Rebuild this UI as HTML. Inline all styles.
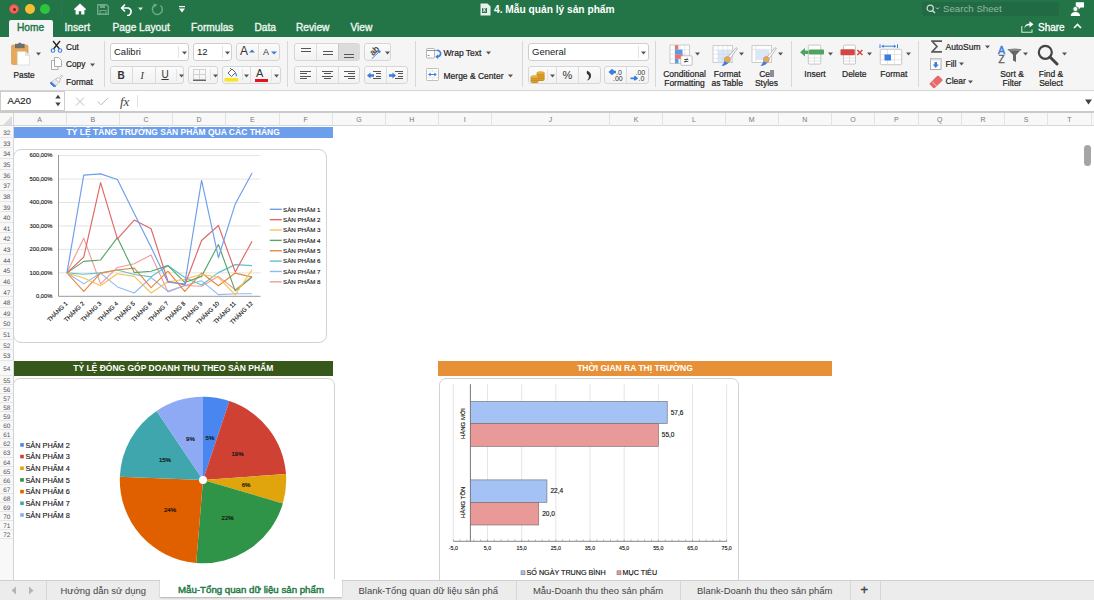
<!DOCTYPE html><html><head><meta charset="utf-8"><style>
*{margin:0;padding:0;box-sizing:border-box}
html,body{width:1094px;height:600px;overflow:hidden;background:#fff;font-family:"Liberation Sans",sans-serif;position:relative}
.a{position:absolute}
.t{position:absolute;white-space:nowrap;line-height:1}
.sb{-webkit-text-stroke:0.3px currentColor}
.rb{-webkit-text-stroke:0.2px #222}
.btn{position:absolute;background:linear-gradient(#fbfbfb,#f2f2f2);border:1px solid #d6d6d6;border-radius:3px}
.sep{position:absolute;width:1px;background:#d8d8d8}
.ch{position:absolute;top:113px;height:13px;font-size:7px;color:#777;text-align:center;line-height:13px;border-right:1px solid #e2e2e2}
.rh{position:absolute;left:0;width:13.5px;font-size:6.4px;color:#555;text-rendering:geometricPrecision;text-align:center;border-bottom:1px solid #e6e6e6}
</style></head><body>
<div class="a" style="left:0;top:0;width:1094px;height:37px;background:#237548"></div>
<div class="a" style="left:9px;top:4px;width:10px;height:10px;border-radius:50%;background:#ed6a5e;border:0.5px solid #cf4f45"></div>
<div class="a" style="left:12.5px;top:7.5px;width:3px;height:3px;border-radius:50%;background:#8c1a10"></div>
<div class="a" style="left:24.5px;top:4px;width:10px;height:10px;border-radius:50%;background:#f6be30"></div>
<div class="a" style="left:40px;top:4px;width:10px;height:10px;border-radius:50%;background:#2ec440"></div>
<div class="a" style="left:61px;top:3px;width:1px;height:13px;background:#2c7a50"></div>
<svg class="a" style="left:73px;top:3px" width="14" height="12" viewBox="0 0 14 12"><path d="M7 0.6 L0.8 6.2 L2 7.2 L2.6 6.7 V11.6 H5.8 V8.2 H8.2 V11.6 H11.4 V6.7 L12 7.2 L13.2 6.2 Z" fill="#fff"/></svg>
<svg class="a" style="left:97px;top:4px" width="12" height="11" viewBox="0 0 12 11"><path d="M0.7 0.7 H9.5 L11.3 2.5 V10.3 H0.7 Z" fill="none" stroke="#6fa886" stroke-width="1.4"/><rect x="3" y="1" width="5" height="3" fill="#6fa886"/><rect x="3" y="6.5" width="6" height="3.5" fill="none" stroke="#6fa886" stroke-width="1"/></svg>
<svg class="a" style="left:120px;top:3px" width="15" height="13" viewBox="0 0 15 13"><path d="M5 1.5 L1.5 5 L5 8.5 M1.8 5 H8.5 A4 4 0 0 1 8.5 12.5 H7" fill="none" stroke="#fff" stroke-width="1.6" stroke-linejoin="round"/></svg>
<svg class="a" style="left:138px;top:7px" width="5" height="4" viewBox="0 0 5 4"><path d="M0 0.5 H5 L2.5 3.5Z" fill="#d8e8de"/></svg>
<svg class="a" style="left:151px;top:3px" width="13" height="13" viewBox="0 0 13 13"><path d="M9.5 2.5 A5 5 0 1 1 4 2" fill="none" stroke="#6fa886" stroke-width="1.5"/><path d="M2.5 0.5 L6.5 1.5 L3.5 4.5Z" fill="#6fa886"/></svg>
<svg class="a" style="left:179px;top:6px" width="6" height="7" viewBox="0 0 6 7"><rect x="0" y="0" width="6" height="1.2" fill="#fff"/><path d="M0 2.6 H6 L3 6.4Z" fill="#fff"/></svg>
<svg class="a" style="left:480px;top:3px" width="11" height="13" viewBox="0 0 11 13"><path d="M0.5 0.5 H7.5 L10.5 3.5 V12.5 H0.5Z" fill="#e8f1ec"/><rect x="2" y="5" width="5" height="5" fill="#237548"/><text x="2.6" y="9.4" font-size="5" font-family="Liberation Sans" font-weight="bold" fill="#fff">X</text></svg>
<div class="t" style="left:494px;top:5px;font-size:10.2px;font-weight:bold;color:#fff">4. Mẫu quản lý sản phẩm</div>
<div class="a" style="left:922px;top:2px;width:137px;height:14px;border-radius:3px;background:#226a43"></div>
<svg class="a" style="left:926px;top:4px" width="14" height="10" viewBox="0 0 14 10"><circle cx="4.2" cy="4.2" r="3.1" fill="none" stroke="#cfe2d6" stroke-width="1.2"/><path d="M6.4 6.4 L9 9" stroke="#cfe2d6" stroke-width="1.4"/><path d="M10 3.5 L11.5 5 L13 3.5" fill="none" stroke="#cfe2d6" stroke-width="0.9"/></svg>
<div class="t" style="left:943px;top:4px;font-size:9.7px;color:#8fbca0">Search Sheet</div>
<svg class="a" style="left:1070px;top:1px" width="16" height="16" viewBox="0 0 16 16"><path d="M5.8 1.2 H14 V6.6 H10.6 L8.6 8.6 V6.6 H5.8Z" fill="#fff"/><circle cx="5.4" cy="8" r="2.5" fill="#fff" stroke="#237548" stroke-width="0.8"/><path d="M0.7 15 Q0.9 11 5.4 11 Q9.9 11 10.1 15Z" fill="#fff"/></svg>
<svg class="a" style="left:1021px;top:21px" width="13" height="12" viewBox="0 0 13 12"><path d="M0.8 5 V11.2 H11 V8.5" fill="none" stroke="#d4e6da" stroke-width="1.1"/><path d="M3 9 Q3.5 4.5 8.5 4.3 V6.6 L12.5 3.3 L8.5 0.2 V2.4 Q3.2 2.8 3 9Z" fill="#fff"/></svg>
<div class="t" style="left:1038px;top:22.5px;font-size:10px;color:#fff;-webkit-text-stroke:0.3px #fff">Share</div>
<svg class="a" style="left:1073px;top:23px" width="9" height="6" viewBox="0 0 9 6"><path d="M1 5 L4.5 1.5 L8 5" fill="none" stroke="#fff" stroke-width="1.6"/></svg>
<div class="a" style="left:9px;top:20px;width:44px;height:17px;background:#f5f5f5;border-radius:2px 2px 0 0"></div>
<div class="t" style="left:17px;top:23px;font-size:10.2px;color:#237548;-webkit-text-stroke:0.4px #237548">Home</div>
<div class="t" style="left:64.5px;top:23px;font-size:10.2px;color:#eef5f0;-webkit-text-stroke:0.35px #eef5f0">Insert</div>
<div class="t" style="left:112.5px;top:23px;font-size:10.2px;color:#eef5f0;-webkit-text-stroke:0.35px #eef5f0">Page Layout</div>
<div class="t" style="left:191px;top:23px;font-size:10.2px;color:#eef5f0;-webkit-text-stroke:0.35px #eef5f0">Formulas</div>
<div class="t" style="left:254.5px;top:23px;font-size:10.2px;color:#eef5f0;-webkit-text-stroke:0.35px #eef5f0">Data</div>
<div class="t" style="left:296px;top:23px;font-size:10.2px;color:#eef5f0;-webkit-text-stroke:0.35px #eef5f0">Review</div>
<div class="t" style="left:350.5px;top:23px;font-size:10.2px;color:#eef5f0;-webkit-text-stroke:0.35px #eef5f0">View</div>
<div class="a" style="left:0;top:37px;width:1094px;height:54px;background:#f5f5f5;border-bottom:1px solid #d4d4d4"></div>
<div class="sep" style="left:103.5px;top:40.5px;height:46px"></div>
<div class="sep" style="left:287px;top:40.5px;height:46px"></div>
<div class="sep" style="left:415px;top:40.5px;height:46px"></div>
<div class="sep" style="left:522px;top:40.5px;height:46px"></div>
<div class="sep" style="left:655px;top:40.5px;height:46px"></div>
<div class="sep" style="left:791px;top:40.5px;height:46px"></div>
<div class="sep" style="left:917.5px;top:40.5px;height:46px"></div>

<svg class="a" style="left:11px;top:41.5px" width="20" height="24" viewBox="0 0 20 24"><rect x="0.4" y="3" width="16.6" height="19.5" rx="1.5" fill="#e8a85c" stroke="#cf9346" stroke-width="0.6"/><path d="M4 1.8 H13.6 V6.2 H4Z" fill="#6e6e6e"/><circle cx="8.8" cy="2" r="1.6" fill="#6e6e6e"/><path d="M6.3 9.5 H14.5 L18.4 13.4 V23 H6.3Z" fill="#fff" stroke="#d0d0d0" stroke-width="0.6"/><path d="M14.5 9.5 V13.4 H18.4" fill="#eee" stroke="#ccc" stroke-width="0.5"/></svg>
<svg class="a" style="left:36px;top:52px" width="5" height="4" viewBox="0 0 5 4"><path d="M0 0.5 H5 L2.5 3.5Z" fill="#555"/></svg>
<div class="t" style="left:13.5px;top:70.5px;font-size:8.3px;color:#222;-webkit-text-stroke:0.2px #222">Paste</div>
<svg class="a" style="left:50px;top:40px" width="13" height="13" viewBox="0 0 13 13"><path d="M3 1 L9.5 9 M10 1 L3.5 9" stroke="#222" stroke-width="1.3"/><circle cx="3" cy="10.5" r="1.8" fill="none" stroke="#3b7ddd" stroke-width="1.1"/><circle cx="10" cy="10.5" r="1.8" fill="none" stroke="#3b7ddd" stroke-width="1.1"/></svg>
<div class="t" style="left:66px;top:42.5px;font-size:8.3px;color:#222;-webkit-text-stroke:0.2px #222">Cut</div>
<svg class="a" style="left:51px;top:57px" width="11" height="13" viewBox="0 0 11 13"><path d="M3.5 0.5 H7.5 L10.5 3.5 V9.5 H3.5Z" fill="#fff" stroke="#999" stroke-width="0.8"/><path d="M0.5 3.5 H3.5 V9.5 H7 V12.5 H0.5Z" fill="#fff" stroke="#999" stroke-width="0.8"/></svg>
<div class="t" style="left:66px;top:60px;font-size:8.3px;color:#222;-webkit-text-stroke:0.2px #222">Copy</div>
<svg class="a" style="left:90px;top:62.5px" width="5" height="4" viewBox="0 0 5 4"><path d="M0 0.5 H5 L2.5 3.5Z" fill="#555"/></svg>
<svg class="a" style="left:50px;top:75px" width="13" height="12" viewBox="0 0 13 12"><path d="M8.3 3.2 L11 0.6 Q11.8 0.1 12.3 0.7 Q12.7 1.3 12.1 1.9 L9.6 4.6Z" fill="#fff" stroke="#999" stroke-width="0.6"/><path d="M5.5 4 L8.2 2.6 L10.2 4.7 L9 7.6Z" fill="#fff" stroke="#999" stroke-width="0.6"/><path d="M5.5 4 L9 7.6 L5.5 11.5 L0.8 7.3Z" fill="#e8e8e8" stroke="#aaa" stroke-width="0.5"/><path d="M1.2 7 L5.8 11.2 L4.4 12 L0.2 8.4Z" fill="#3a7ee0" stroke="#3a7ee0" stroke-width="1"/></svg>
<div class="t" style="left:66px;top:77.5px;font-size:8.5px;color:#222;-webkit-text-stroke:0.2px #222">Format</div>

<div class="btn" style="left:110px;top:43px;width:79px;height:17.5px;background:#fff;border-color:#cfcfcf"></div>
<div class="a" style="left:177.5px;top:45.5px;width:1px;height:12px;background:#e4e4e4"></div>
<div class="t" style="left:114px;top:46.5px;font-size:9.5px;color:#222">Calibri</div>
<svg class="a" style="left:182px;top:51px" width="5" height="4" viewBox="0 0 5 4"><path d="M0 0.5 H5 L2.5 3.5Z" fill="#555"/></svg>
<div class="btn" style="left:193px;top:43px;width:39px;height:17.5px;background:#fff;border-color:#cfcfcf"></div>
<div class="a" style="left:221.5px;top:45.5px;width:1px;height:12px;background:#e4e4e4"></div>
<div class="t" style="left:197px;top:46.5px;font-size:9.5px;color:#222">12</div>
<svg class="a" style="left:225px;top:51px" width="5" height="4" viewBox="0 0 5 4"><path d="M0 0.5 H5 L2.5 3.5Z" fill="#555"/></svg>
<div class="btn" style="left:236px;top:43px;width:44px;height:17.5px"></div>
<div class="a" style="left:258.0px;top:43.5px;width:1px;height:16.5px;background:#dcdcdc"></div>
<div class="t" style="left:240px;top:45px;font-size:12px;color:#333">A</div>
<svg class="a" style="left:249px;top:49px" width="6" height="4" viewBox="0 0 6 4"><path d="M0 3.5 H6 L3 0.5Z" fill="#3b7ddd"/></svg>
<div class="t" style="left:263px;top:48px;font-size:9px;color:#333">A</div>
<svg class="a" style="left:271px;top:51px" width="6" height="4" viewBox="0 0 6 4"><path d="M0 0.5 H6 L3 3.5Z" fill="#3b7ddd"/></svg>
<div class="btn" style="left:110px;top:66px;width:74px;height:17.5px"></div>
<div class="a" style="left:132.0px;top:66.5px;width:1px;height:16.5px;background:#dcdcdc"></div>
<div class="a" style="left:154.5px;top:66.5px;width:1px;height:16.5px;background:#dcdcdc"></div>
<div class="a" style="left:176.0px;top:68.5px;width:1px;height:12px;background:#e4e4e4"></div>
<div class="t" style="left:117.5px;top:70.5px;font-size:10px;font-weight:bold;color:#333">B</div>
<div class="t" style="left:140.5px;top:70.5px;font-size:10px;font-style:italic;font-family:'Liberation Serif';color:#333">I</div>
<div class="t" style="left:161.5px;top:70px;font-size:10px;color:#333;text-decoration:underline">U</div>
<svg class="a" style="left:178.5px;top:73.5px" width="5" height="4" viewBox="0 0 5 4"><path d="M0 0.5 H5 L2.5 3.5Z" fill="#555"/></svg>
<div class="btn" style="left:188px;top:66px;width:30px;height:17.5px"></div>
<div class="a" style="left:210.0px;top:68.5px;width:1px;height:12px;background:#e4e4e4"></div>
<svg class="a" style="left:193px;top:69px" width="13" height="12" viewBox="0 0 13 12"><rect x="0.5" y="0.5" width="12" height="10" fill="none" stroke="#c8c8c8" stroke-width="0.8"/><path d="M6.5 0.5 V10.5 M0.5 5.5 H12.5" stroke="#c8c8c8" stroke-width="0.8"/><path d="M0 11.3 H13" stroke="#555" stroke-width="1.2"/></svg>
<svg class="a" style="left:212.5px;top:73.5px" width="5" height="4" viewBox="0 0 5 4"><path d="M0 0.5 H5 L2.5 3.5Z" fill="#555"/></svg>
<div class="btn" style="left:222px;top:66px;width:58.5px;height:17.5px"></div>
<div class="a" style="left:241.5px;top:68.5px;width:1px;height:12px;background:#e4e4e4"></div>
<div class="a" style="left:250.0px;top:66.5px;width:1px;height:16.5px;background:#dcdcdc"></div>
<div class="a" style="left:271.0px;top:68.5px;width:1px;height:12px;background:#e4e4e4"></div>
<svg class="a" style="left:224px;top:67px" width="15" height="15" viewBox="0 0 15 15"><path d="M4 6 L8 2 L11.5 5.5 L7.5 9.5Z" fill="#fff" stroke="#555" stroke-width="0.9"/><path d="M6 1 L8 3" stroke="#555" stroke-width="0.9"/><path d="M11.5 6 Q13 8 12 9" stroke="#3b7ddd" stroke-width="1.2" fill="none"/><rect x="0.5" y="11" width="13.5" height="3.5" fill="#fbe41d"/></svg>
<svg class="a" style="left:244px;top:73.5px" width="5" height="4" viewBox="0 0 5 4"><path d="M0 0.5 H5 L2.5 3.5Z" fill="#555"/></svg>
<div class="t" style="left:256px;top:68px;font-size:11px;color:#333">A</div>
<div class="a" style="left:254.5px;top:78.5px;width:13.5px;height:3px;background:#e8141a"></div>
<svg class="a" style="left:273.5px;top:73.5px" width="5" height="4" viewBox="0 0 5 4"><path d="M0 0.5 H5 L2.5 3.5Z" fill="#555"/></svg>

<div class="btn" style="left:294px;top:43px;width:66px;height:17.5px"></div>
<div class="a" style="left:338px;top:43.5px;width:22px;height:16.5px;background:#dcdcdc;border-radius:0 2px 2px 0"></div>
<div class="a" style="left:316.0px;top:43.5px;width:1px;height:16.5px;background:#dcdcdc"></div>
<div class="a" style="left:338.0px;top:43.5px;width:1px;height:16.5px;background:#c8c8c8"></div>
<div class="a" style="left:301px;top:48px;width:10px;height:1px;background:#555"></div><div class="a" style="left:301px;top:50.5px;width:10px;height:1px;background:#555"></div>
<div class="a" style="left:322.5px;top:51px;width:10px;height:1px;background:#555"></div><div class="a" style="left:322.5px;top:53.5px;width:10px;height:1px;background:#555"></div>
<div class="a" style="left:344px;top:54px;width:10px;height:1px;background:#555"></div><div class="a" style="left:344px;top:56.5px;width:10px;height:1px;background:#555"></div>
<div class="btn" style="left:364px;top:43px;width:27px;height:17.5px"></div>
<svg class="a" style="left:367px;top:44px" width="18" height="16" viewBox="0 0 18 16"><text x="7.5" y="9.5" font-size="8.5" font-family="Liberation Sans" text-anchor="middle" fill="#333" stroke="#333" stroke-width="0.2" transform="rotate(-45 7.5 7)">ab</text><path d="M4.8 14.8 L12.3 7.6" stroke="#3b7ddd" stroke-width="0.9"/><circle cx="12.3" cy="7.6" r="1.3" fill="#3b7ddd"/></svg>
<svg class="a" style="left:385px;top:51px" width="5" height="4" viewBox="0 0 5 4"><path d="M0 0.5 H5 L2.5 3.5Z" fill="#555"/></svg>
<div class="btn" style="left:294px;top:66px;width:66px;height:17.5px"></div>
<div class="a" style="left:316.0px;top:66.5px;width:1px;height:16.5px;background:#dcdcdc"></div>
<div class="a" style="left:338.0px;top:66.5px;width:1px;height:16.5px;background:#dcdcdc"></div>
<div class="a" style="left:300px;top:70.5px;width:11px;height:1px;background:#555"></div><div class="a" style="left:300px;top:73.0px;width:7px;height:1px;background:#555"></div><div class="a" style="left:300px;top:75.5px;width:11px;height:1px;background:#555"></div><div class="a" style="left:300px;top:78.0px;width:7px;height:1px;background:#555"></div><div class="a" style="left:322.0px;top:70.5px;width:11px;height:1px;background:#555"></div><div class="a" style="left:324.0px;top:73.0px;width:7px;height:1px;background:#555"></div><div class="a" style="left:322.0px;top:75.5px;width:11px;height:1px;background:#555"></div><div class="a" style="left:324.0px;top:78.0px;width:7px;height:1px;background:#555"></div><div class="a" style="left:344px;top:70.5px;width:11px;height:1px;background:#555"></div><div class="a" style="left:348px;top:73.0px;width:7px;height:1px;background:#555"></div><div class="a" style="left:344px;top:75.5px;width:11px;height:1px;background:#555"></div><div class="a" style="left:348px;top:78.0px;width:7px;height:1px;background:#555"></div>
<div class="btn" style="left:364px;top:66px;width:44px;height:17.5px"></div>
<div class="a" style="left:385.5px;top:66.5px;width:1px;height:16.5px;background:#dcdcdc"></div>
<div class="a" style="left:373px;top:70.5px;width:8px;height:1px;background:#555"></div><div class="a" style="left:376px;top:73.0px;width:5px;height:1px;background:#555"></div><div class="a" style="left:376px;top:75.5px;width:5px;height:1px;background:#555"></div><div class="a" style="left:373px;top:78.0px;width:8px;height:1px;background:#555"></div><div class="a" style="left:394.5px;top:70.5px;width:8px;height:1px;background:#555"></div><div class="a" style="left:397.5px;top:73.0px;width:5px;height:1px;background:#555"></div><div class="a" style="left:397.5px;top:75.5px;width:5px;height:1px;background:#555"></div><div class="a" style="left:394.5px;top:78.0px;width:8px;height:1px;background:#555"></div><svg class="a" style="left:367px;top:71.5px" width="7" height="7" viewBox="0 0 7 7"><path d="M0 3.5 L3.5 0.5 V2.3 H7 V4.7 H3.5 V6.5Z" fill="#3b7ddd"/></svg>
<svg class="a" style="left:388.5px;top:71.5px" width="7" height="7" viewBox="0 0 7 7"><path d="M7 3.5 L3.5 0.5 V2.3 H0 V4.7 H3.5 V6.5Z" fill="#3b7ddd"/></svg>

<svg class="a" style="left:425.5px;top:47.5px" width="17" height="11" viewBox="0 0 17 11"><rect x="0.5" y="0.5" width="8" height="9.5" rx="1" fill="#fff" stroke="#9a9a9a" stroke-width="0.7"/><path d="M1 2.5 H10 M1.5 7.5 H3.5" stroke="#777" stroke-width="0.8"/><path d="M10.5 2.2 Q14.6 2.4 14.6 5.6 Q14.6 8.4 11.6 8.7" fill="none" stroke="#3b7ddd" stroke-width="1.6"/><path d="M12.2 6.2 L9.3 8.8 L12.2 11Z" fill="#3b7ddd"/></svg>
<div class="t" style="left:443.5px;top:48.5px;font-size:8.5px;color:#222;-webkit-text-stroke:0.2px #222">Wrap Text</div>
<svg class="a" style="left:486.0px;top:50.5px" width="5" height="4" viewBox="0 0 5 4"><path d="M0 0.5 H5 L2.5 3.5Z" fill="#555"/></svg>

<svg class="a" style="left:426px;top:68px" width="13" height="13" viewBox="0 0 13 13"><rect x="0.5" y="0.5" width="12" height="12" rx="0.8" fill="#fff" stroke="#a8a8a8" stroke-width="0.7"/><path d="M6.5 0.5 V4 M6.5 9 V12.5 M0.5 3.2 H12.5 M0.5 9.8 H12.5" stroke="#d8d8d8" stroke-width="0.5"/><path d="M3 6.5 H10" stroke="#3b7ddd" stroke-width="1"/><path d="M2.2 6.5 L4.6 4.6 V8.4Z M10.8 6.5 L8.4 4.6 V8.4Z" fill="#3b7ddd"/></svg>
<div class="t" style="left:443.5px;top:71.5px;font-size:8.5px;color:#222;-webkit-text-stroke:0.2px #222">Merge &amp; Center</div>
<svg class="a" style="left:507.5px;top:73.5px" width="5" height="4" viewBox="0 0 5 4"><path d="M0 0.5 H5 L2.5 3.5Z" fill="#555"/></svg>

<div class="btn" style="left:528px;top:43px;width:120.5px;height:17.5px;background:#fff;border-color:#cfcfcf"></div>
<div class="a" style="left:637.5px;top:45.5px;width:1px;height:12px;background:#e4e4e4"></div>
<div class="t" style="left:532px;top:46.5px;font-size:9.5px;color:#222">General</div>
<svg class="a" style="left:640.5px;top:50.5px" width="5" height="4" viewBox="0 0 5 4"><path d="M0 0.5 H5 L2.5 3.5Z" fill="#555"/></svg>

<div class="btn" style="left:528px;top:66px;width:72.5px;height:17.5px"></div>
<div class="a" style="left:547.0px;top:68.5px;width:1px;height:12px;background:#e4e4e4"></div>
<div class="a" style="left:555.5px;top:66.5px;width:1px;height:16.5px;background:#dcdcdc"></div>
<div class="a" style="left:578.0px;top:66.5px;width:1px;height:16.5px;background:#dcdcdc"></div>
<svg class="a" style="left:530px;top:68.5px" width="16" height="14" viewBox="0 0 16 14"><ellipse cx="10.6" cy="10.5" rx="3.9" ry="1.5" fill="#c98f1e"/><ellipse cx="10.6" cy="9.5" rx="3.9" ry="1.5" fill="#eab13a" stroke="#b47d14" stroke-width="0.35"/><ellipse cx="10.6" cy="8.7" rx="3.9" ry="1.5" fill="#c98f1e"/><ellipse cx="10.6" cy="7.7" rx="3.9" ry="1.5" fill="#eab13a" stroke="#b47d14" stroke-width="0.35"/><ellipse cx="10.6" cy="6.9" rx="3.9" ry="1.5" fill="#c98f1e"/><ellipse cx="10.6" cy="5.9" rx="3.9" ry="1.5" fill="#eab13a" stroke="#b47d14" stroke-width="0.35"/><ellipse cx="10.6" cy="5.1" rx="3.9" ry="1.5" fill="#c98f1e"/><ellipse cx="10.6" cy="4.1" rx="3.9" ry="1.5" fill="#eab13a" stroke="#b47d14" stroke-width="0.35"/><ellipse cx="4.6" cy="12.6" rx="3.9" ry="1.5" fill="#c98f1e"/><ellipse cx="4.6" cy="11.6" rx="3.9" ry="1.5" fill="#eab13a" stroke="#b47d14" stroke-width="0.35"/><ellipse cx="4.6" cy="10.799999999999999" rx="3.9" ry="1.5" fill="#c98f1e"/><ellipse cx="4.6" cy="9.799999999999999" rx="3.9" ry="1.5" fill="#eab13a" stroke="#b47d14" stroke-width="0.35"/><ellipse cx="4.6" cy="9.0" rx="3.9" ry="1.5" fill="#c98f1e"/><ellipse cx="4.6" cy="8.0" rx="3.9" ry="1.5" fill="#eab13a" stroke="#b47d14" stroke-width="0.35"/></svg>
<svg class="a" style="left:549.5px;top:73.5px" width="5" height="4" viewBox="0 0 5 4"><path d="M0 0.5 H5 L2.5 3.5Z" fill="#555"/></svg>
<div class="t" style="left:562.5px;top:69.5px;font-size:11px;color:#333">%</div>
<svg class="a" style="left:586px;top:70px" width="6" height="11" viewBox="0 0 6 11"><path d="M1.2 0.8 Q5.4 2.6 5 6.2 Q4.6 9.6 0.8 10.4 Q3 8.6 3 6.4 Q3 5 1.6 4.3 Q0.6 3.8 0.7 2.4 Q0.8 1.2 1.2 0.8Z" fill="#333"/></svg>
<div class="btn" style="left:604px;top:66px;width:45px;height:17.5px"></div>
<div class="a" style="left:626.0px;top:66.5px;width:1px;height:16.5px;background:#dcdcdc"></div>
<svg class="a" style="left:608px;top:68px" width="18" height="14" viewBox="0 0 18 14"><path d="M0.5 4 L4 0.8 L7.5 4 L4 7.2Z" fill="#3b7ddd"/><rect x="4" y="2.8" width="4" height="2.4" fill="#3b7ddd"/><text x="8" y="7" font-size="7" font-family="Liberation Sans" fill="#333">.0</text><text x="5" y="13.2" font-size="7" font-family="Liberation Sans" fill="#333">.00</text></svg>
<svg class="a" style="left:630px;top:68px" width="18" height="14" viewBox="0 0 18 14"><text x="5.5" y="7" font-size="7" font-family="Liberation Sans" fill="#333">.00</text><path d="M0.5 9.6 H4 V7.8 L7.8 10.3 L4 12.8 V11.2 H0.5Z" fill="#3b7ddd"/><path d="M3.5 10.3 L5.5 8 L8 10.3 L5.5 12.6Z" fill="#3b7ddd"/><text x="8.5" y="13.2" font-size="7" font-family="Liberation Sans" fill="#333">.0</text></svg>

<svg class="a" style="left:669px;top:44px" width="24" height="22" viewBox="0 0 24 22"><rect x="1" y="1" width="19.6" height="18.5" fill="#fff" stroke="#b8b8b8" stroke-width="0.7"/><path d="M1 5.6 H20.6 M1 10.2 H20.6 M1 14.8 H20.6 M6 1 V19.5 M11 1 V19.5 M15.8 1 V19.5" stroke="#d2d2d2" stroke-width="0.5"/><rect x="6" y="1.2" width="3.3" height="4.4" fill="#e57373"/><rect x="6" y="5.6" width="7.5" height="4.6" fill="#5b9be6"/><rect x="6" y="10.2" width="8" height="4.6" fill="#e57373"/><rect x="6" y="14.8" width="3.5" height="4.6" fill="#5b9be6"/><rect x="11.8" y="11.8" width="11.3" height="9.5" rx="1" fill="#fff" stroke="#9a9a9a" stroke-width="0.6"/><text x="17.4" y="19.3" font-size="8.5" font-family="Liberation Sans" text-anchor="middle" fill="#333">&#8800;</text></svg>
<svg class="a" style="left:695.0px;top:51.5px" width="5" height="4" viewBox="0 0 5 4"><path d="M0 0.5 H5 L2.5 3.5Z" fill="#555"/></svg>

<svg class="a" style="left:712px;top:44px" width="27" height="23" viewBox="0 0 27 23"><rect x="1" y="1.7" width="19.7" height="16.7" fill="#fff" stroke="#b8b8b8" stroke-width="0.7"/><rect x="6" y="6" width="14.5" height="12.2" fill="#dde8f8"/><path d="M1 6 H20.7 M1 10.2 H20.7 M1 14.3 H20.7 M6 1.7 V18.4 M11 1.7 V18.4 M15.8 1.7 V18.4" stroke="#cbd3de" stroke-width="0.5"/><path d="M23.6 4.2 Q25 3.2 25.3 4.6 L17.8 15.2 L15.6 13.4Z" fill="#fff" stroke="#8a8a8a" stroke-width="0.6"/><circle cx="15.3" cy="15.6" r="3" fill="#e3a95c" stroke="#c88a3a" stroke-width="0.5"/><path d="M12.8 16.4 Q14 19.5 17 18.2 Q14.5 21.5 9.5 22 Q12 19.5 12.8 16.4Z" fill="#3b7ddd"/></svg>
<svg class="a" style="left:739.0px;top:51.5px" width="5" height="4" viewBox="0 0 5 4"><path d="M0 0.5 H5 L2.5 3.5Z" fill="#555"/></svg>

<svg class="a" style="left:751px;top:44px" width="27" height="23" viewBox="0 0 27 23"><rect x="1" y="1.7" width="19.7" height="16.7" fill="#fff" stroke="#b8b8b8" stroke-width="0.7"/><path d="M1 5.3 H20.7 M4.6 1.7 V18.4" stroke="#d0d0d0" stroke-width="0.5"/><rect x="4.6" y="5.3" width="13.6" height="10.8" fill="#dbe7f8"/><path d="M23.6 4.2 Q25 3.2 25.3 4.6 L17.8 15.2 L15.6 13.4Z" fill="#fff" stroke="#8a8a8a" stroke-width="0.6"/><circle cx="15.3" cy="15.6" r="3" fill="#e3a95c" stroke="#c88a3a" stroke-width="0.5"/><path d="M12.8 16.4 Q14 19.5 17 18.2 Q14.5 21.5 9.5 22 Q12 19.5 12.8 16.4Z" fill="#3b7ddd"/></svg>
<svg class="a" style="left:777.5px;top:51.5px" width="5" height="4" viewBox="0 0 5 4"><path d="M0 0.5 H5 L2.5 3.5Z" fill="#555"/></svg>
<div class="t" style="left:644.5px;width:80px;text-align:center;top:70.2px;font-size:8.5px;color:#222;-webkit-text-stroke:0.2px #222">Conditional</div>
<div class="t" style="left:644.5px;width:80px;text-align:center;top:79.3px;font-size:8.5px;color:#222;-webkit-text-stroke:0.2px #222">Formatting</div>
<div class="t" style="left:687.2px;width:80px;text-align:center;top:70.2px;font-size:8.5px;color:#222;-webkit-text-stroke:0.2px #222">Format</div>
<div class="t" style="left:687.2px;width:80px;text-align:center;top:79.3px;font-size:8.5px;color:#222;-webkit-text-stroke:0.2px #222">as Table</div>
<div class="t" style="left:726.5px;width:80px;text-align:center;top:70.2px;font-size:8.5px;color:#222;-webkit-text-stroke:0.2px #222">Cell</div>
<div class="t" style="left:726.5px;width:80px;text-align:center;top:79.3px;font-size:8.5px;color:#222;-webkit-text-stroke:0.2px #222">Styles</div>
<div class="t" style="left:775px;width:80px;text-align:center;top:70.2px;font-size:8.5px;color:#222;-webkit-text-stroke:0.2px #222">Insert</div>
<div class="t" style="left:814.3px;width:80px;text-align:center;top:70.2px;font-size:8.5px;color:#222;-webkit-text-stroke:0.2px #222">Delete</div>
<div class="t" style="left:853.8px;width:80px;text-align:center;top:70.2px;font-size:8.5px;color:#222;-webkit-text-stroke:0.2px #222">Format</div>

<svg class="a" style="left:799px;top:44px" width="26" height="22" viewBox="0 0 26 22"><rect x="9.3" y="1.1" width="12.5" height="19" rx="1.2" fill="#fff" stroke="#b0b0b0" stroke-width="0.7"/><path d="M9.3 14 H21.8 M9.3 17 H21.8 M15.5 11 V20" stroke="#d0d0d0" stroke-width="0.6"/><rect x="10" y="5.6" width="15" height="5" rx="0.8" fill="#4ea35e"/><path d="M1 8.3 L6 4 V12.6Z" fill="#4ea35e"/><rect x="5.5" y="6.6" width="4" height="3.4" fill="#4ea35e"/></svg>
<svg class="a" style="left:827.5px;top:51.5px" width="5" height="4" viewBox="0 0 5 4"><path d="M0 0.5 H5 L2.5 3.5Z" fill="#555"/></svg>

<svg class="a" style="left:840px;top:44px" width="26" height="22" viewBox="0 0 26 22"><rect x="3.5" y="1.1" width="12" height="19" rx="1.2" fill="#fff" stroke="#b0b0b0" stroke-width="0.7"/><path d="M3.5 14 H15.5 M3.5 17 H15.5 M9.5 11 V20" stroke="#d0d0d0" stroke-width="0.6"/><rect x="0.5" y="5.3" width="14.3" height="5.9" rx="0.8" fill="#d44545"/><path d="M17.3 6 L22.4 11 M22.4 6 L17.3 11" stroke="#d44545" stroke-width="1.5"/></svg>
<svg class="a" style="left:866.5px;top:51.5px" width="5" height="4" viewBox="0 0 5 4"><path d="M0 0.5 H5 L2.5 3.5Z" fill="#555"/></svg>

<svg class="a" style="left:879px;top:42px" width="24" height="24" viewBox="0 0 24 24"><path d="M1 2.3 V6.1 M18.5 2.3 V6.1 M3.8 4.2 H15.7" stroke="#3b7ddd" stroke-width="1"/><path d="M2.3 4.2 L4.6 2.4 V6Z M17.2 4.2 L14.9 2.4 V6Z" fill="#3b7ddd"/><rect x="1.3" y="7.3" width="21.4" height="15.4" rx="1.2" fill="#fff" stroke="#b0b0b0" stroke-width="0.7"/><path d="M1.3 12.5 H22.7 M1.3 17.8 H22.7 M8.5 7.3 V22.7 M15.5 7.3 V22.7" stroke="#d6d6d6" stroke-width="0.6"/><rect x="5.5" y="12.6" width="6.5" height="6" rx="0.6" fill="#3b7ddd"/></svg>
<svg class="a" style="left:905.5px;top:51.5px" width="5" height="4" viewBox="0 0 5 4"><path d="M0 0.5 H5 L2.5 3.5Z" fill="#555"/></svg>

<svg class="a" style="left:930.5px;top:40px" width="12" height="13" viewBox="0 0 12 13"><path d="M11 1.2 H1.2 L6 6.5 L1.2 11.8 H11" fill="none" stroke="#5a5a5a" stroke-width="1.7" stroke-linejoin="miter"/></svg>
<div class="t" style="left:945.5px;top:42.5px;font-size:8.5px;color:#222;-webkit-text-stroke:0.2px #222">AutoSum</div>
<svg class="a" style="left:984.5px;top:44.5px" width="5" height="4" viewBox="0 0 5 4"><path d="M0 0.5 H5 L2.5 3.5Z" fill="#555"/></svg>

<svg class="a" style="left:930px;top:57.5px" width="12" height="12" viewBox="0 0 12 12"><rect x="0.5" y="0.5" width="10.5" height="11" fill="#fff" stroke="#999" stroke-width="0.8"/><rect x="0.5" y="0.5" width="10.5" height="2" fill="#ddd"/><path d="M4.5 4 H7 V6.5 H8.8 L5.75 10 L2.7 6.5 H4.5Z" fill="#3b7ddd"/></svg>
<div class="t" style="left:945.5px;top:59.5px;font-size:8.5px;color:#222;-webkit-text-stroke:0.2px #222">Fill</div>
<svg class="a" style="left:958.5px;top:61.5px" width="5" height="4" viewBox="0 0 5 4"><path d="M0 0.5 H5 L2.5 3.5Z" fill="#555"/></svg>

<svg class="a" style="left:929px;top:74.5px" width="14" height="13" viewBox="0 0 14 13"><path d="M1 8.5 L8 1.5 Q9 0.7 10 1.5 L12.8 4.3 Q13.5 5.2 12.7 6 L5.8 12.5 Q5 13 4.2 12.4 L1.3 9.6 Q0.6 9 1 8.5Z" fill="#e86a6a" stroke="#c54848" stroke-width="0.6"/><path d="M3 6.5 L7.5 11" stroke="#fbdada" stroke-width="0.8"/></svg>
<div class="t" style="left:945.5px;top:77px;font-size:8.5px;color:#222;-webkit-text-stroke:0.2px #222">Clear</div>
<svg class="a" style="left:967.5px;top:79.5px" width="5" height="4" viewBox="0 0 5 4"><path d="M0 0.5 H5 L2.5 3.5Z" fill="#555"/></svg>

<div class="t" style="left:998px;top:44.5px;font-size:10.5px;color:#3b7ddd;-webkit-text-stroke:0.5px #3b7ddd">A</div>
<div class="t" style="left:998.5px;top:54.5px;font-size:10px;color:#666;-webkit-text-stroke:0.4px #666">Z</div>
<svg class="a" style="left:1007px;top:47.5px" width="15" height="15" viewBox="0 0 15 15"><path d="M0.5 1 H14.5 L9 7 V14 L6 12.5 V7Z" fill="#666"/><ellipse cx="7.5" cy="1.8" rx="7" ry="1.3" fill="#888"/></svg>
<svg class="a" style="left:1023.0px;top:52px" width="5" height="4" viewBox="0 0 5 4"><path d="M0 0.5 H5 L2.5 3.5Z" fill="#555"/></svg>
<div class="t" style="left:972px;width:80px;text-align:center;top:70.2px;font-size:8.5px;color:#222;-webkit-text-stroke:0.2px #222">Sort &amp;</div>
<div class="t" style="left:972px;width:80px;text-align:center;top:79.3px;font-size:8.5px;color:#222;-webkit-text-stroke:0.2px #222">Filter</div>

<svg class="a" style="left:1037px;top:44px" width="22" height="22" viewBox="0 0 22 22"><circle cx="8.3" cy="8.3" r="6.5" fill="none" stroke="#444" stroke-width="2.2"/><path d="M13 13 L20 20" stroke="#444" stroke-width="3" stroke-linecap="round"/></svg>
<svg class="a" style="left:1061.5px;top:52px" width="5" height="4" viewBox="0 0 5 4"><path d="M0 0.5 H5 L2.5 3.5Z" fill="#555"/></svg>
<div class="t" style="left:1011px;width:80px;text-align:center;top:70.2px;font-size:8.5px;color:#222;-webkit-text-stroke:0.2px #222">Find &amp;</div>
<div class="t" style="left:1011px;width:80px;text-align:center;top:79.3px;font-size:8.5px;color:#222;-webkit-text-stroke:0.2px #222">Select</div>

<div class="a" style="left:0;top:91px;width:1094px;height:21px;background:#fff"></div>
<div class="a" style="left:0;top:91px;width:65px;height:20px;background:#fff;border:1px solid #cdcdcd"></div>
<div class="t" style="left:7.5px;top:96px;font-size:9.6px;color:#222;-webkit-text-stroke:0.15px #222">AA20</div>
<svg class="a" style="left:55px;top:94px" width="6" height="14" viewBox="0 0 6 14"><path d="M0.3 4.5 H5.7 L3 0.8Z M0.3 8.5 H5.7 L3 12.2Z" fill="#444"/></svg>
<svg class="a" style="left:75px;top:97px" width="10" height="9" viewBox="0 0 10 9"><path d="M1 0.5 L9 8.5 M9 0.5 L1 8.5" stroke="#bbb" stroke-width="1"/></svg>
<svg class="a" style="left:96.5px;top:97px" width="12" height="9" viewBox="0 0 12 9"><path d="M0.8 4.5 L4 7.8 L11.2 0.8" fill="none" stroke="#bbb" stroke-width="1"/></svg>
<div class="t" style="left:120px;top:94.5px;font-size:13px;font-style:italic;font-family:'Liberation Serif';color:#444">fx</div>
<div class="a" style="left:137px;top:95px;width:1px;height:12px;background:#e0e0e0"></div>
<svg class="a" style="left:1085px;top:98.5px" width="7" height="6" viewBox="0 0 7 6"><path d="M0 0.5 H7 L3.5 5.5Z" fill="#444"/></svg>
<div class="a" style="left:0;top:111px;width:1094px;height:2px;background:#cacaca"></div>
<div class="a" style="left:0;top:113px;width:1094px;height:13px;background:#f8f8f8;border-bottom:1px solid #d6d6d6"></div>
<div class="a" style="left:0;top:113px;width:13.5px;height:13px;border-right:1px solid #d6d6d6"></div>
<svg class="a" style="left:3px;top:116px" width="9" height="9" viewBox="0 0 9 9"><path d="M9 0 V9 H0Z" fill="#dcdcdc"/></svg>
<div class="ch" style="left:13.5px;width:53.0px">A</div>
<div class="ch" style="left:66.5px;width:53.5px">B</div>
<div class="ch" style="left:120px;width:53px">C</div>
<div class="ch" style="left:173px;width:53px">D</div>
<div class="ch" style="left:226px;width:53.5px">E</div>
<div class="ch" style="left:279.5px;width:53.5px">F</div>
<div class="ch" style="left:333px;width:53px">G</div>
<div class="ch" style="left:386px;width:52.5px">H</div>
<div class="ch" style="left:438.5px;width:53.5px">I</div>
<div class="ch" style="left:492px;width:118px">J</div>
<div class="ch" style="left:610px;width:53px">K</div>
<div class="ch" style="left:663px;width:63px">L</div>
<div class="ch" style="left:726px;width:52.5px">M</div>
<div class="ch" style="left:778.5px;width:53.5px">N</div>
<div class="ch" style="left:832px;width:43px">O</div>
<div class="ch" style="left:875px;width:43.5px">P</div>
<div class="ch" style="left:918.5px;width:43.5px">Q</div>
<div class="ch" style="left:962px;width:43px">R</div>
<div class="ch" style="left:1005px;width:43px">S</div>
<div class="ch" style="left:1048px;width:44px">T</div>
<div class="a" style="left:0;top:126px;width:13.5px;height:454px;background:#f8f8f8;border-right:1px solid #d6d6d6"></div>
<div class="rh" style="top:127.20px;height:10.62px;line-height:14.22px">32</div>
<div class="rh" style="top:137.82px;height:10.62px;line-height:14.22px">33</div>
<div class="rh" style="top:148.44px;height:10.62px;line-height:14.22px">34</div>
<div class="rh" style="top:159.06px;height:10.62px;line-height:14.22px">35</div>
<div class="rh" style="top:169.68px;height:10.62px;line-height:14.22px">36</div>
<div class="rh" style="top:180.30px;height:10.62px;line-height:14.22px">37</div>
<div class="rh" style="top:190.92px;height:10.62px;line-height:14.22px">38</div>
<div class="rh" style="top:201.54px;height:10.62px;line-height:14.22px">39</div>
<div class="rh" style="top:212.16px;height:10.62px;line-height:14.22px">40</div>
<div class="rh" style="top:222.78px;height:10.62px;line-height:14.22px">41</div>
<div class="rh" style="top:233.40px;height:10.62px;line-height:14.22px">42</div>
<div class="rh" style="top:244.02px;height:10.62px;line-height:14.22px">43</div>
<div class="rh" style="top:254.64px;height:10.62px;line-height:14.22px">44</div>
<div class="rh" style="top:265.26px;height:10.62px;line-height:14.22px">45</div>
<div class="rh" style="top:275.88px;height:10.62px;line-height:14.22px">46</div>
<div class="rh" style="top:286.50px;height:10.62px;line-height:14.22px">47</div>
<div class="rh" style="top:297.12px;height:10.62px;line-height:14.22px">48</div>
<div class="rh" style="top:307.74px;height:10.62px;line-height:14.22px">49</div>
<div class="rh" style="top:318.36px;height:10.62px;line-height:14.22px">50</div>
<div class="rh" style="top:328.98px;height:10.62px;line-height:14.22px">51</div>
<div class="rh" style="top:339.60px;height:10.62px;line-height:14.22px">52</div>
<div class="rh" style="top:350.22px;height:10.62px;line-height:14.22px">53</div>
<div class="rh" style="top:360.84px;height:15px;line-height:18.60px">54</div>
<div class="rh" style="top:375.84px;height:9.08px;line-height:12.68px">55</div>
<div class="rh" style="top:384.92px;height:9.08px;line-height:12.68px">56</div>
<div class="rh" style="top:394.00px;height:9.08px;line-height:12.68px">57</div>
<div class="rh" style="top:403.08px;height:9.08px;line-height:12.68px">58</div>
<div class="rh" style="top:412.16px;height:9.08px;line-height:12.68px">59</div>
<div class="rh" style="top:421.24px;height:9.08px;line-height:12.68px">60</div>
<div class="rh" style="top:430.32px;height:9.08px;line-height:12.68px">61</div>
<div class="rh" style="top:439.40px;height:9.08px;line-height:12.68px">62</div>
<div class="rh" style="top:448.48px;height:9.08px;line-height:12.68px">63</div>
<div class="rh" style="top:457.56px;height:9.08px;line-height:12.68px">64</div>
<div class="rh" style="top:466.64px;height:9.08px;line-height:12.68px">65</div>
<div class="rh" style="top:475.72px;height:9.08px;line-height:12.68px">66</div>
<div class="rh" style="top:484.80px;height:9.08px;line-height:12.68px">67</div>
<div class="rh" style="top:493.88px;height:9.08px;line-height:12.68px">68</div>
<div class="rh" style="top:502.96px;height:9.08px;line-height:12.68px">69</div>
<div class="rh" style="top:512.04px;height:9.08px;line-height:12.68px">70</div>
<div class="rh" style="top:521.12px;height:9.08px;line-height:12.68px">71</div>
<div class="rh" style="top:530.20px;height:9.08px;line-height:12.68px">72</div>

<div class="a" style="left:13.5px;top:126.5px;width:319.5px;height:11.5px;background:#6d9eeb"></div>
<div class="t" style="left:13.5px;width:319.5px;text-align:center;top:128px;font-size:8.5px;font-weight:bold;color:#fff">TỶ LỆ TĂNG TRƯỞNG SẢN PHẨM QUA CÁC THÁNG</div>
<div class="a" style="left:13px;top:148.5px;width:313.5px;height:194px;border:1px solid #d2d2d2;border-radius:8px;background:#fff"></div>
<div class="a" style="left:13.5px;top:361px;width:319.5px;height:14.5px;background:#38571a"></div>
<div class="t" style="left:13.5px;width:319.5px;text-align:center;top:364px;font-size:8.5px;font-weight:bold;color:#fff">TỶ LỆ ĐÓNG GÓP DOANH THU THEO SẢN PHẨM</div>
<div class="a" style="left:13px;top:377.5px;width:321.5px;height:210px;border:1px solid #d2d2d2;border-radius:7px;background:#fff"></div>
<div class="a" style="left:438px;top:360.8px;width:394px;height:14.8px;background:#e69138"></div>
<div class="t" style="left:438px;width:394px;text-align:center;top:364px;font-size:8.5px;font-weight:bold;color:#fff">THỜI GIAN RA THỊ TRƯỜNG</div>
<div class="a" style="left:438.5px;top:377.5px;width:300.5px;height:210px;border:1px solid #d2d2d2;border-radius:7px;background:#fff"></div>
<svg class="a" style="left:0;top:0" width="1094" height="600" viewBox="0 0 1094 600" font-family="Liberation Sans">
<text x="52.5" y="298.10" font-size="5.85" text-anchor="end" fill="#111" stroke="#111" stroke-width="0.12">0,00%</text>
<line x1="58.5" y1="272.85" x2="260.5" y2="272.85" stroke="#dcdcdc" stroke-width="0.8"/>
<text x="52.5" y="274.65" font-size="5.85" text-anchor="end" fill="#111" stroke="#111" stroke-width="0.12">100,00%</text>
<line x1="58.5" y1="249.40" x2="260.5" y2="249.40" stroke="#dcdcdc" stroke-width="0.8"/>
<text x="52.5" y="251.20" font-size="5.85" text-anchor="end" fill="#111" stroke="#111" stroke-width="0.12">200,00%</text>
<line x1="58.5" y1="225.95" x2="260.5" y2="225.95" stroke="#dcdcdc" stroke-width="0.8"/>
<text x="52.5" y="227.75" font-size="5.85" text-anchor="end" fill="#111" stroke="#111" stroke-width="0.12">300,00%</text>
<line x1="58.5" y1="202.50" x2="260.5" y2="202.50" stroke="#dcdcdc" stroke-width="0.8"/>
<text x="52.5" y="204.30" font-size="5.85" text-anchor="end" fill="#111" stroke="#111" stroke-width="0.12">400,00%</text>
<line x1="58.5" y1="179.05" x2="260.5" y2="179.05" stroke="#dcdcdc" stroke-width="0.8"/>
<text x="52.5" y="180.85" font-size="5.85" text-anchor="end" fill="#111" stroke="#111" stroke-width="0.12">500,00%</text>
<line x1="58.5" y1="155.60" x2="260.5" y2="155.60" stroke="#dcdcdc" stroke-width="0.8"/>
<text x="52.5" y="157.40" font-size="5.85" text-anchor="end" fill="#111" stroke="#111" stroke-width="0.12">600,00%</text>
<line x1="58.5" y1="155" x2="58.5" y2="296.3" stroke="#9a9a9a" stroke-width="1"/>
<line x1="58.5" y1="296.3" x2="260.5" y2="296.3" stroke="#9a9a9a" stroke-width="1"/>
<polyline points="66.92,272.85 83.75,238.14 100.58,283.87 117.42,267.46 134.25,263.70 151.08,255.03 167.92,291.84 184.75,285.51 201.58,286.22 218.42,276.37 235.25,289.73 252.08,276.37" fill="none" stroke="#f19d97" stroke-width="1.15" stroke-linejoin="round"/>
<polyline points="66.92,272.85 83.75,283.87 100.58,273.08 117.42,286.92 134.25,293.02 151.08,277.54 167.92,291.38 184.75,285.51 201.58,280.82 218.42,294.66 235.25,293.72 252.08,293.72" fill="none" stroke="#93b8f5" stroke-width="1.15" stroke-linejoin="round"/>
<polyline points="66.92,272.85 83.75,274.26 100.58,272.85 117.42,270.04 134.25,274.49 151.08,276.84 167.92,265.58 184.75,277.54 201.58,285.04 218.42,272.62 235.25,264.64 252.08,265.58" fill="none" stroke="#62c2c8" stroke-width="1.15" stroke-linejoin="round"/>
<polyline points="66.92,272.85 83.75,291.38 100.58,273.08 117.42,270.04 134.25,268.16 151.08,287.62 167.92,271.21 184.75,291.38 201.58,273.08 218.42,285.75 235.25,273.08 252.08,277.07" fill="none" stroke="#e8893c" stroke-width="1.15" stroke-linejoin="round"/>
<polyline points="66.92,272.85 83.75,261.36 100.58,259.95 117.42,237.68 134.25,272.62 151.08,271.21 167.92,265.58 184.75,282.46 201.58,276.37 218.42,244.48 235.25,290.91 252.08,277.07" fill="none" stroke="#5aa46a" stroke-width="1.15" stroke-linejoin="round"/>
<polyline points="66.92,272.85 83.75,278.01 100.58,285.75 117.42,273.79 134.25,276.37 151.08,293.02 167.92,281.76 184.75,279.42 201.58,274.26 218.42,277.54 235.25,294.89 252.08,269.57" fill="none" stroke="#f6c25a" stroke-width="1.15" stroke-linejoin="round"/>
<polyline points="66.92,272.85 83.75,257.14 100.58,182.57 117.42,238.85 134.25,220.09 151.08,228.76 167.92,281.29 184.75,285.04 201.58,240.49 218.42,225.48 235.25,271.91 252.08,241.19" fill="none" stroke="#e06666" stroke-width="1.15" stroke-linejoin="round"/>
<polyline points="66.92,272.85 83.75,175.06 100.58,173.89 117.42,179.52 134.25,213.52 151.08,247.29 167.92,282.23 184.75,283.87 201.58,180.46 218.42,257.61 235.25,203.91 252.08,172.95" fill="none" stroke="#6d9eeb" stroke-width="1.15" stroke-linejoin="round"/>
<text x="68.12" y="303.90" font-size="6.0" text-anchor="end" fill="#111" stroke="#111" stroke-width="0.12" transform="rotate(-45 68.12 303.90)">THÁNG 1</text>
<text x="84.95" y="303.90" font-size="6.0" text-anchor="end" fill="#111" stroke="#111" stroke-width="0.12" transform="rotate(-45 84.95 303.90)">THÁNG 2</text>
<text x="101.78" y="303.90" font-size="6.0" text-anchor="end" fill="#111" stroke="#111" stroke-width="0.12" transform="rotate(-45 101.78 303.90)">THÁNG 3</text>
<text x="118.62" y="303.90" font-size="6.0" text-anchor="end" fill="#111" stroke="#111" stroke-width="0.12" transform="rotate(-45 118.62 303.90)">THÁNG 4</text>
<text x="135.45" y="303.90" font-size="6.0" text-anchor="end" fill="#111" stroke="#111" stroke-width="0.12" transform="rotate(-45 135.45 303.90)">THÁNG 5</text>
<text x="152.28" y="303.90" font-size="6.0" text-anchor="end" fill="#111" stroke="#111" stroke-width="0.12" transform="rotate(-45 152.28 303.90)">THÁNG 6</text>
<text x="169.12" y="303.90" font-size="6.0" text-anchor="end" fill="#111" stroke="#111" stroke-width="0.12" transform="rotate(-45 169.12 303.90)">THÁNG 7</text>
<text x="185.95" y="303.90" font-size="6.0" text-anchor="end" fill="#111" stroke="#111" stroke-width="0.12" transform="rotate(-45 185.95 303.90)">THÁNG 8</text>
<text x="202.78" y="303.90" font-size="6.0" text-anchor="end" fill="#111" stroke="#111" stroke-width="0.12" transform="rotate(-45 202.78 303.90)">THÁNG 9</text>
<text x="219.62" y="303.90" font-size="6.0" text-anchor="end" fill="#111" stroke="#111" stroke-width="0.12" transform="rotate(-45 219.62 303.90)">THÁNG 10</text>
<text x="236.45" y="303.90" font-size="6.0" text-anchor="end" fill="#111" stroke="#111" stroke-width="0.12" transform="rotate(-45 236.45 303.90)">THÁNG 11</text>
<text x="253.28" y="303.90" font-size="6.0" text-anchor="end" fill="#111" stroke="#111" stroke-width="0.12" transform="rotate(-45 253.28 303.90)">THÁNG 12</text>
<line x1="269.8" y1="209.30" x2="281.8" y2="209.30" stroke="#6d9eeb" stroke-width="1.4"/>
<text x="283" y="211.50" font-size="6.2" fill="#1a1a1a" stroke="#1a1a1a" stroke-width="0.15">SẢN PHẨM 1</text>
<line x1="269.8" y1="219.66" x2="281.8" y2="219.66" stroke="#e06666" stroke-width="1.4"/>
<text x="283" y="221.86" font-size="6.2" fill="#1a1a1a" stroke="#1a1a1a" stroke-width="0.15">SẢN PHẨM 2</text>
<line x1="269.8" y1="230.02" x2="281.8" y2="230.02" stroke="#f6c25a" stroke-width="1.4"/>
<text x="283" y="232.22" font-size="6.2" fill="#1a1a1a" stroke="#1a1a1a" stroke-width="0.15">SẢN PHẨM 3</text>
<line x1="269.8" y1="240.38" x2="281.8" y2="240.38" stroke="#5aa46a" stroke-width="1.4"/>
<text x="283" y="242.58" font-size="6.2" fill="#1a1a1a" stroke="#1a1a1a" stroke-width="0.15">SẢN PHẨM 4</text>
<line x1="269.8" y1="250.74" x2="281.8" y2="250.74" stroke="#e8893c" stroke-width="1.4"/>
<text x="283" y="252.94" font-size="6.2" fill="#1a1a1a" stroke="#1a1a1a" stroke-width="0.15">SẢN PHẨM 5</text>
<line x1="269.8" y1="261.10" x2="281.8" y2="261.10" stroke="#62c2c8" stroke-width="1.4"/>
<text x="283" y="263.30" font-size="6.2" fill="#1a1a1a" stroke="#1a1a1a" stroke-width="0.15">SẢN PHẨM 6</text>
<line x1="269.8" y1="271.46" x2="281.8" y2="271.46" stroke="#93b8f5" stroke-width="1.4"/>
<text x="283" y="273.66" font-size="6.2" fill="#1a1a1a" stroke="#1a1a1a" stroke-width="0.15">SẢN PHẨM 7</text>
<line x1="269.8" y1="281.82" x2="281.8" y2="281.82" stroke="#f19d97" stroke-width="1.4"/>
<text x="283" y="284.02" font-size="6.2" fill="#1a1a1a" stroke="#1a1a1a" stroke-width="0.15">SẢN PHẨM 8</text>
<path d="M203.0,480.0 L203.00,396.80 A83.2,83.2 0 0 1 229.41,401.10 Z" fill="#4a86f0"/>
<path d="M203.0,480.0 L229.41,401.10 A83.2,83.2 0 0 1 285.98,473.94 Z" fill="#cf4233"/>
<path d="M203.0,480.0 L285.98,473.94 A83.2,83.2 0 0 1 282.81,503.51 Z" fill="#e0a40c"/>
<path d="M203.0,480.0 L282.81,503.51 A83.2,83.2 0 0 1 196.21,562.92 Z" fill="#2f9447"/>
<path d="M203.0,480.0 L196.21,562.92 A83.2,83.2 0 0 1 119.86,476.86 Z" fill="#e06000"/>
<path d="M203.0,480.0 L119.86,476.86 A83.2,83.2 0 0 1 156.67,410.89 Z" fill="#3fa6ae"/>
<path d="M203.0,480.0 L156.67,410.89 A83.2,83.2 0 0 1 203.00,396.80 Z" fill="#8eaaf5"/>
<circle cx="203.0" cy="480.0" r="4" fill="#fff"/>
<text x="209.9" y="440" font-size="6" text-anchor="middle" fill="#111" stroke="#111" stroke-width="0.2">5%</text>
<text x="237.5" y="455.9" font-size="6" text-anchor="middle" fill="#111" stroke="#111" stroke-width="0.2">19%</text>
<text x="246" y="487.4" font-size="6" text-anchor="middle" fill="#111" stroke="#111" stroke-width="0.2">6%</text>
<text x="227.6" y="519.5" font-size="6" text-anchor="middle" fill="#111" stroke="#111" stroke-width="0.2">22%</text>
<text x="170" y="512" font-size="6" text-anchor="middle" fill="#111" stroke="#111" stroke-width="0.2">24%</text>
<text x="164.9" y="461.6" font-size="6" text-anchor="middle" fill="#111" stroke="#111" stroke-width="0.2">15%</text>
<text x="190.4" y="440.9" font-size="6" text-anchor="middle" fill="#111" stroke="#111" stroke-width="0.2">9%</text>
<rect x="20.2" y="443.10" width="3.6" height="3.6" fill="#4a86f0"/>
<text x="25.5" y="447.50" font-size="7.3" fill="#1a1a1a" stroke="#1a1a1a" stroke-width="0.15">SẢN PHẨM 2</text>
<rect x="20.2" y="454.78" width="3.6" height="3.6" fill="#cf4233"/>
<text x="25.5" y="459.18" font-size="7.3" fill="#1a1a1a" stroke="#1a1a1a" stroke-width="0.15">SẢN PHẨM 3</text>
<rect x="20.2" y="466.46" width="3.6" height="3.6" fill="#e0a40c"/>
<text x="25.5" y="470.86" font-size="7.3" fill="#1a1a1a" stroke="#1a1a1a" stroke-width="0.15">SẢN PHẨM 4</text>
<rect x="20.2" y="478.14" width="3.6" height="3.6" fill="#2f9447"/>
<text x="25.5" y="482.54" font-size="7.3" fill="#1a1a1a" stroke="#1a1a1a" stroke-width="0.15">SẢN PHẨM 5</text>
<rect x="20.2" y="489.82" width="3.6" height="3.6" fill="#e06000"/>
<text x="25.5" y="494.22" font-size="7.3" fill="#1a1a1a" stroke="#1a1a1a" stroke-width="0.15">SẢN PHẨM 6</text>
<rect x="20.2" y="501.50" width="3.6" height="3.6" fill="#3fa6ae"/>
<text x="25.5" y="505.90" font-size="7.3" fill="#1a1a1a" stroke="#1a1a1a" stroke-width="0.15">SẢN PHẨM 7</text>
<rect x="20.2" y="513.18" width="3.6" height="3.6" fill="#8eaaf5"/>
<text x="25.5" y="517.58" font-size="7.3" fill="#1a1a1a" stroke="#1a1a1a" stroke-width="0.15">SẢN PHẨM 8</text>
<line x1="453.31" y1="384.2" x2="453.31" y2="541.3" stroke="#dedede" stroke-width="0.8"/>
<text x="453.31" y="550" font-size="5.3" text-anchor="middle" fill="#111" stroke="#111" stroke-width="0.12">-5,0</text>
<line x1="487.48" y1="384.2" x2="487.48" y2="541.3" stroke="#dedede" stroke-width="0.8"/>
<text x="487.48" y="550" font-size="5.3" text-anchor="middle" fill="#111" stroke="#111" stroke-width="0.12">5,0</text>
<line x1="521.65" y1="384.2" x2="521.65" y2="541.3" stroke="#dedede" stroke-width="0.8"/>
<text x="521.65" y="550" font-size="5.3" text-anchor="middle" fill="#111" stroke="#111" stroke-width="0.12">15,0</text>
<line x1="555.82" y1="384.2" x2="555.82" y2="541.3" stroke="#dedede" stroke-width="0.8"/>
<text x="555.82" y="550" font-size="5.3" text-anchor="middle" fill="#111" stroke="#111" stroke-width="0.12">25,0</text>
<line x1="590.00" y1="384.2" x2="590.00" y2="541.3" stroke="#dedede" stroke-width="0.8"/>
<text x="590.00" y="550" font-size="5.3" text-anchor="middle" fill="#111" stroke="#111" stroke-width="0.12">35,0</text>
<line x1="624.16" y1="384.2" x2="624.16" y2="541.3" stroke="#dedede" stroke-width="0.8"/>
<text x="624.16" y="550" font-size="5.3" text-anchor="middle" fill="#111" stroke="#111" stroke-width="0.12">45,0</text>
<line x1="658.34" y1="384.2" x2="658.34" y2="541.3" stroke="#dedede" stroke-width="0.8"/>
<text x="658.34" y="550" font-size="5.3" text-anchor="middle" fill="#111" stroke="#111" stroke-width="0.12">55,0</text>
<line x1="692.50" y1="384.2" x2="692.50" y2="541.3" stroke="#dedede" stroke-width="0.8"/>
<text x="692.50" y="550" font-size="5.3" text-anchor="middle" fill="#111" stroke="#111" stroke-width="0.12">65,0</text>
<line x1="726.67" y1="384.2" x2="726.67" y2="541.3" stroke="#dedede" stroke-width="0.8"/>
<text x="726.67" y="550" font-size="5.3" text-anchor="middle" fill="#111" stroke="#111" stroke-width="0.12">75,0</text>
<line x1="453.31" y1="539.5" x2="453.31" y2="541" stroke="#888" stroke-width="0.6"/>
<line x1="460.15" y1="539.5" x2="460.15" y2="541" stroke="#888" stroke-width="0.6"/>
<line x1="466.98" y1="539.5" x2="466.98" y2="541" stroke="#888" stroke-width="0.6"/>
<line x1="473.82" y1="539.5" x2="473.82" y2="541" stroke="#888" stroke-width="0.6"/>
<line x1="480.65" y1="539.5" x2="480.65" y2="541" stroke="#888" stroke-width="0.6"/>
<line x1="487.48" y1="539.5" x2="487.48" y2="541" stroke="#888" stroke-width="0.6"/>
<line x1="494.32" y1="539.5" x2="494.32" y2="541" stroke="#888" stroke-width="0.6"/>
<line x1="501.15" y1="539.5" x2="501.15" y2="541" stroke="#888" stroke-width="0.6"/>
<line x1="507.99" y1="539.5" x2="507.99" y2="541" stroke="#888" stroke-width="0.6"/>
<line x1="514.82" y1="539.5" x2="514.82" y2="541" stroke="#888" stroke-width="0.6"/>
<line x1="521.65" y1="539.5" x2="521.65" y2="541" stroke="#888" stroke-width="0.6"/>
<line x1="528.49" y1="539.5" x2="528.49" y2="541" stroke="#888" stroke-width="0.6"/>
<line x1="535.32" y1="539.5" x2="535.32" y2="541" stroke="#888" stroke-width="0.6"/>
<line x1="542.16" y1="539.5" x2="542.16" y2="541" stroke="#888" stroke-width="0.6"/>
<line x1="548.99" y1="539.5" x2="548.99" y2="541" stroke="#888" stroke-width="0.6"/>
<line x1="555.82" y1="539.5" x2="555.82" y2="541" stroke="#888" stroke-width="0.6"/>
<line x1="562.66" y1="539.5" x2="562.66" y2="541" stroke="#888" stroke-width="0.6"/>
<line x1="569.49" y1="539.5" x2="569.49" y2="541" stroke="#888" stroke-width="0.6"/>
<line x1="576.33" y1="539.5" x2="576.33" y2="541" stroke="#888" stroke-width="0.6"/>
<line x1="583.16" y1="539.5" x2="583.16" y2="541" stroke="#888" stroke-width="0.6"/>
<line x1="590.00" y1="539.5" x2="590.00" y2="541" stroke="#888" stroke-width="0.6"/>
<line x1="596.83" y1="539.5" x2="596.83" y2="541" stroke="#888" stroke-width="0.6"/>
<line x1="603.66" y1="539.5" x2="603.66" y2="541" stroke="#888" stroke-width="0.6"/>
<line x1="610.50" y1="539.5" x2="610.50" y2="541" stroke="#888" stroke-width="0.6"/>
<line x1="617.33" y1="539.5" x2="617.33" y2="541" stroke="#888" stroke-width="0.6"/>
<line x1="624.16" y1="539.5" x2="624.16" y2="541" stroke="#888" stroke-width="0.6"/>
<line x1="631.00" y1="539.5" x2="631.00" y2="541" stroke="#888" stroke-width="0.6"/>
<line x1="637.83" y1="539.5" x2="637.83" y2="541" stroke="#888" stroke-width="0.6"/>
<line x1="644.67" y1="539.5" x2="644.67" y2="541" stroke="#888" stroke-width="0.6"/>
<line x1="651.50" y1="539.5" x2="651.50" y2="541" stroke="#888" stroke-width="0.6"/>
<line x1="658.34" y1="539.5" x2="658.34" y2="541" stroke="#888" stroke-width="0.6"/>
<line x1="665.17" y1="539.5" x2="665.17" y2="541" stroke="#888" stroke-width="0.6"/>
<line x1="672.00" y1="539.5" x2="672.00" y2="541" stroke="#888" stroke-width="0.6"/>
<line x1="678.84" y1="539.5" x2="678.84" y2="541" stroke="#888" stroke-width="0.6"/>
<line x1="685.67" y1="539.5" x2="685.67" y2="541" stroke="#888" stroke-width="0.6"/>
<line x1="692.50" y1="539.5" x2="692.50" y2="541" stroke="#888" stroke-width="0.6"/>
<line x1="699.34" y1="539.5" x2="699.34" y2="541" stroke="#888" stroke-width="0.6"/>
<line x1="706.17" y1="539.5" x2="706.17" y2="541" stroke="#888" stroke-width="0.6"/>
<line x1="713.01" y1="539.5" x2="713.01" y2="541" stroke="#888" stroke-width="0.6"/>
<line x1="719.84" y1="539.5" x2="719.84" y2="541" stroke="#888" stroke-width="0.6"/>
<line x1="726.67" y1="539.5" x2="726.67" y2="541" stroke="#888" stroke-width="0.6"/>
<line x1="470.4" y1="384.2" x2="470.4" y2="541.3" stroke="#555" stroke-width="0.8"/>
<line x1="453.3" y1="541.3" x2="726.9" y2="541.3" stroke="#777" stroke-width="0.9"/>
<rect x="470.4" y="401.4" width="196.82" height="22.10" fill="#a4c2f4" stroke="#6a6a6a" stroke-width="0.6"/>
<text x="670.72" y="414.65" font-size="6.5" fill="#111" stroke="#111" stroke-width="0.15">57,6</text>
<rect x="470.4" y="423.5" width="187.94" height="22.90" fill="#ea9999" stroke="#6a6a6a" stroke-width="0.6"/>
<text x="661.84" y="437.15" font-size="6.5" fill="#111" stroke="#111" stroke-width="0.15">55,0</text>
<rect x="470.4" y="479.9" width="76.54" height="22.50" fill="#a4c2f4" stroke="#6a6a6a" stroke-width="0.6"/>
<text x="550.44" y="493.35" font-size="6.5" fill="#111" stroke="#111" stroke-width="0.15">22,4</text>
<rect x="470.4" y="502.4" width="68.34" height="22.60" fill="#ea9999" stroke="#6a6a6a" stroke-width="0.6"/>
<text x="542.24" y="515.90" font-size="6.5" fill="#111" stroke="#111" stroke-width="0.15">20,0</text>
<text x="465" y="423.7" font-size="6" text-anchor="middle" fill="#111" stroke="#111" stroke-width="0.15" transform="rotate(-90 465 423.7)">HÀNG MỚI</text>
<text x="465" y="502.4" font-size="6" text-anchor="middle" fill="#111" stroke="#111" stroke-width="0.15" transform="rotate(-90 465 502.4)">HÀNG TỒN</text>
<rect x="521" y="570.8" width="4" height="4" fill="#a4c2f4" stroke="#6a6a6a" stroke-width="0.5"/>
<text x="526.5" y="575.2" font-size="7.2" fill="#111" stroke="#111" stroke-width="0.15">SỐ NGÀY TRUNG BÌNH</text>
<rect x="617" y="570.8" width="4" height="4" fill="#ea9999" stroke="#6a6a6a" stroke-width="0.5"/>
<text x="622.5" y="575.2" font-size="7.2" fill="#111" stroke="#111" stroke-width="0.15">MỤC TIÊU</text>
</svg><div class="a" style="left:1084px;top:145px;width:7px;height:21px;border-radius:4px;background:#a5a5a5"></div>

<div class="a" style="left:0;top:580px;width:1094px;height:20px;background:#ececec;border-top:1px solid #d0d0d0"></div>
<svg class="a" style="left:10px;top:586px" width="26" height="9" viewBox="0 0 26 9"><path d="M6 0.5 L1.5 4.5 L6 8.5Z" fill="#b5b5b5"/><path d="M19 0.5 L23.5 4.5 L19 8.5Z" fill="#b5b5b5"/></svg>
<div class="a" style="left:46px;top:581px;width:1px;height:19px;background:#d6d6d6"></div>
<div class="t" style="left:60.5px;top:585.5px;font-size:9.45px;color:#444">Hướng dẫn sử dụng</div>
<div class="a" style="left:160px;top:579px;width:181.5px;height:18px;background:#fff;box-shadow:0 1px 1.5px rgba(0,0,0,0.25)"></div>
<div class="t" style="left:178px;top:585px;font-size:9.7px;color:#1f7a45;-webkit-text-stroke:0.45px #1f7a45">Mẫu-Tổng quan dữ liệu sản phẩm</div>
<div class="t" style="left:358.5px;top:585.5px;font-size:9.45px;color:#444">Blank-Tổng quan dữ liệu sản phẩ</div>
<div class="a" style="left:516px;top:581px;width:1px;height:19px;background:#d6d6d6"></div>
<div class="t" style="left:533px;top:585.5px;font-size:9.45px;color:#444">Mẫu-Doanh thu theo sản phẩm</div>
<div class="a" style="left:680px;top:581px;width:1px;height:19px;background:#d6d6d6"></div>
<div class="t" style="left:697px;top:585.5px;font-size:9.45px;color:#444">Blank-Doanh thu theo sản phẩm</div>
<div class="a" style="left:850px;top:581px;width:1px;height:19px;background:#d6d6d6"></div>
<div class="t" style="left:860.5px;top:582.5px;font-size:13px;color:#444;-webkit-text-stroke:0.4px #444">+</div>
<div class="a" style="left:879.5px;top:581px;width:1px;height:19px;background:#d6d6d6"></div>
</body></html>
